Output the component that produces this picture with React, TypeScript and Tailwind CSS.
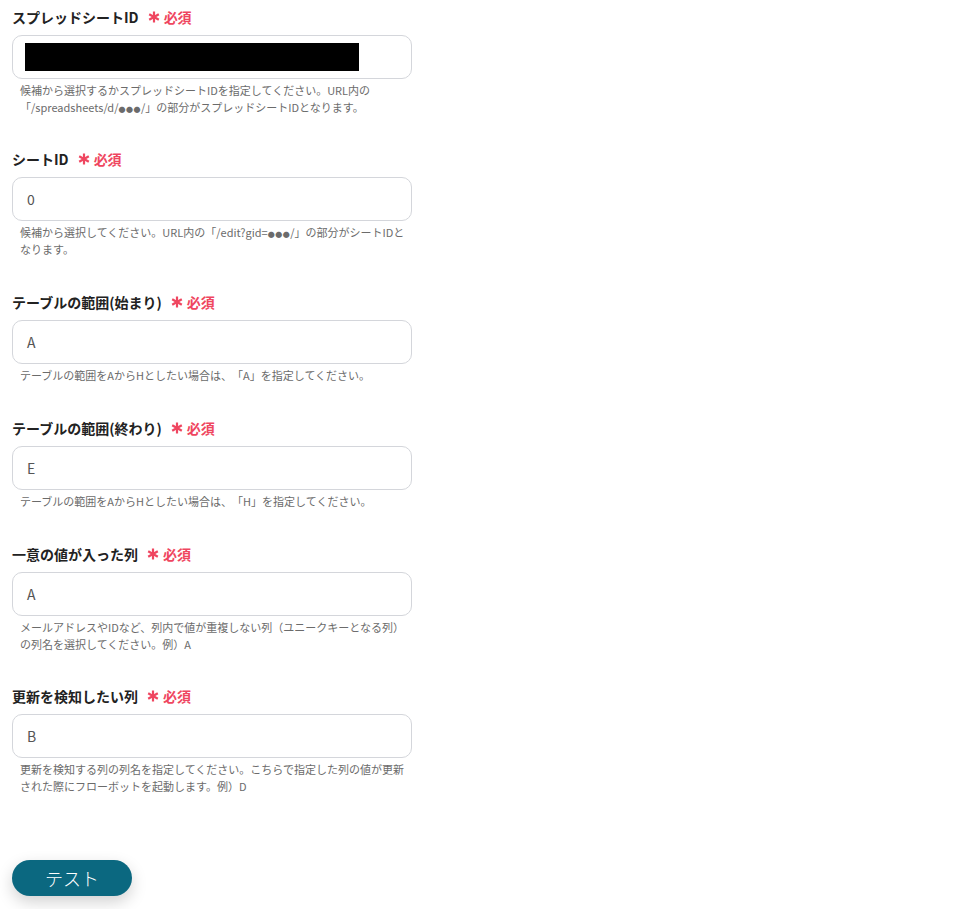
import React from "react";

const font = { fontFamily: '"Noto Sans CJK JP", "Noto Sans", sans-serif' };

function Req() {
  return (
    <span className="ml-[9px] inline-flex items-center gap-[4px] text-[14px] font-bold text-[#ef4660]">
      <svg width="12" height="12" viewBox="0 0 12 12" className="mt-[-1px]">
        <g stroke="#ef4660" strokeWidth="2.2" strokeLinecap="butt">
          <line x1="6" y1="0.5" x2="6" y2="11.5" />
          <line x1="1.2" y1="3.2" x2="10.8" y2="8.8" />
          <line x1="1.2" y1="8.8" x2="10.8" y2="3.2" />
        </g>
      </svg>
      必須
    </span>
  );
}

const Dots = () => <span className="inline-block text-[7px] leading-[11px] tracking-[0.5px]">●●●</span>;

type Field = { label: string; value?: string; redacted?: boolean; help: React.ReactNode };

const fields: Field[] = [
  {
    label: "スプレッドシートID",
    redacted: true,
    help: (
      <>
        候補から選択するかスプレッドシートIDを指定してください。URL内の「/spreadsheets/d/<Dots />/」の部分がスプレッドシートIDとなります。
      </>
    ),
  },
  {
    label: "シートID",
    value: "0",
    help: (
      <>
        候補から選択してください。URL内の「/edit?gid=<Dots />/」の部分がシートIDとなります。
      </>
    ),
  },
  {
    label: "テーブルの範囲(始まり)",
    value: "A",
    help: "テーブルの範囲をAからHとしたい場合は、「A」を指定してください。",
  },
  {
    label: "テーブルの範囲(終わり)",
    value: "E",
    help: "テーブルの範囲をAからHとしたい場合は、「H」を指定してください。",
  },
  {
    label: "一意の値が入った列",
    value: "A",
    help: "メールアドレスやIDなど、列内で値が重複しない列（ユニークキーとなる列）の列名を選択してください。例）A",
  },
  {
    label: "更新を検知したい列",
    value: "B",
    help: "更新を検知する列の列名を指定してください。こちらで指定した列の値が更新された際にフローボットを起動します。例）D",
  },
];

export default function App() {
  return (
    <div className="min-h-[909px] w-[978px] bg-white" style={font}>
      <div className="flex w-[412px] flex-col gap-[32px] pl-[12px] pt-[6px]">
        {fields.map((f, i) => (
          <div key={f.label} className={`flex flex-col ${i === 2 || i === 3 || i === 4 ? "mt-[1px]" : ""}`}>
            <div className="flex h-[22px] items-center text-[14px] font-bold leading-[22px] text-[#222]">
              {f.label}
              <Req />
            </div>
            <div className="mt-[7px] flex h-[44px] items-center rounded-[10px] border border-[#d4d6db] bg-white px-[14px] text-[14px] text-[#555]">
              {f.redacted ? (
                <div className="ml-[-2px] h-[28px] w-[334px] bg-black" />
              ) : (
                <span>{f.value}</span>
              )}
            </div>
            <p className="mt-[3px] pl-[8px] pr-[2px] text-[11px] leading-[17px] text-[#6b6b6b] [text-spacing-trim:space-all]">
              {f.help}
            </p>
          </div>
        ))}
      </div>
      <div className="pl-[12px] pt-[65px]">
        <button className="flex h-[36px] w-[120px] items-center justify-center rounded-full bg-[#0b6880] text-[18px] font-light text-white shadow-[0_6px_16px_rgba(0,0,0,0.18)]">
          テスト
        </button>
      </div>
    </div>
  );
}
